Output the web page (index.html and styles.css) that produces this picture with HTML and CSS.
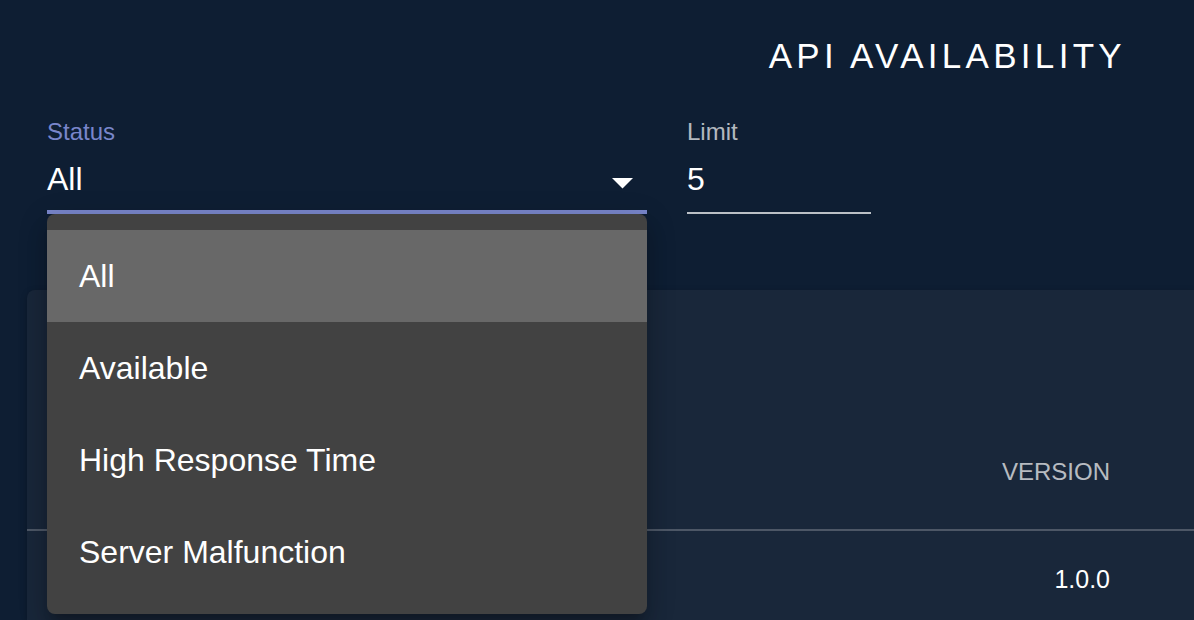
FILE: index.html
```html
<!DOCTYPE html>
<html lang="en">
<head>
<meta charset="utf-8">
<title>API Availability</title>
<link rel="stylesheet" href="styles.css">
</head>
<body>
<div class="page">
  <header class="top">
    <h1 class="title">API AVAILABILITY</h1>
  </header>

  <div class="filters">
    <div class="field field-status">
      <label class="label label-active">Status</label>
      <div class="control control-focused">
        <span class="value">All</span>
        <svg class="arrow" viewBox="0 0 10 5" width="21" height="10.5" aria-hidden="true"><path d="M0 0l5 5 5-5z" fill="#ffffff"/></svg>
      </div>
      <ul class="menu">
        <li class="menu-item menu-item-selected">All</li>
        <li class="menu-item">Available</li>
        <li class="menu-item">High Response Time</li>
        <li class="menu-item">Server Malfunction</li>
      </ul>
    </div>
    <div class="field field-limit">
      <label class="label">Limit</label>
      <div class="control control-plain">
        <span class="value">5</span>
      </div>
    </div>
  </div>

  <section class="card">
    <table class="table">
      <thead>
        <tr><th class="cell-spacer"></th><th class="head-cell">VERSION</th></tr>
      </thead>
      <tbody>
        <tr><td class="cell-spacer"></td><td class="body-cell">1.0.0</td></tr>
      </tbody>
    </table>
  </section>
</div>
</body>
</html>
```

FILE: styles.css
```css
* { box-sizing: border-box; }

html, body {
  margin: 0;
  padding: 0;
  background: #0e1e33;
  overflow: hidden;
}

body {
  font-family: "Liberation Sans", Arial, sans-serif;
  color: #ffffff;
  width: 1194px;
  height: 620px;
}

.page {
  padding-top: 36px;
}

.top {
  padding-right: 68px;
  text-align: right;
}

.title {
  margin: 0;
  font-size: 35px;
  line-height: 40px;
  font-weight: 400;
  letter-spacing: 4.3px;
  color: #ffffff;
}

.filters {
  display: flex;
  gap: 40px;
  margin-top: 44px;
  padding-left: 47px;
}

.field {
  display: flex;
  flex-direction: column;
  position: relative;
}

.field-status { width: 600px; }
.field-limit { width: 184px; }

.label {
  font-size: 24px;
  line-height: 24px;
  color: rgba(255, 255, 255, 0.7);
}

.label-active { color: #7986cb; }

.control {
  display: flex;
  justify-content: space-between;
  padding-top: 16px;
}

.control-focused {
  padding-bottom: 12px;
  border-bottom: 4px solid #7986cb;
}

.control-plain {
  padding-bottom: 14px;
  border-bottom: 2px solid rgba(255, 255, 255, 0.72);
}

.value {
  font-size: 32px;
  line-height: 38px;
  height: 38px;
}

.arrow {
  margin-top: 18px;
  margin-right: 14px;
}

.menu {
  position: absolute;
  left: 0;
  top: 94px;
  width: 600px;
  margin: 0;
  padding: 16px 0;
  list-style: none;
  background: #424242;
  border-radius: 8px;
  box-shadow: 0 10px 10px -6px rgba(0,0,0,0.2), 0 16px 20px 2px rgba(0,0,0,0.14), 0 6px 28px 4px rgba(0,0,0,0.12);
  z-index: 10;
}

.menu-item {
  display: flex;
  align-items: center;
  height: 92px;
  padding: 0 32px;
  font-size: 32px;
  line-height: 38px;
  color: #ffffff;
}

.menu-item-selected { background: #686868; }

.card {
  margin-top: 76px;
  margin-left: 27px;
  height: 330px;
  background: #19273a;
  border-radius: 8px 0 0 0;
  box-shadow: 0 2px 6px rgba(0,0,0,0.25);
}

.table {
  width: 100%;
  border-collapse: collapse;
}

.cell-spacer { padding: 0; }

.head-cell {
  padding: 170px 84px 45px 0;
  text-align: right;
  font-size: 24px;
  line-height: 24px;
  font-weight: 400;
  color: rgba(255, 255, 255, 0.7);
  width: 300px;
}

.table thead tr { border-bottom: 2px solid #4d5766; }

.body-cell {
  padding: 36px 84px 0 0;
  text-align: right;
  font-size: 25px;
  line-height: 25px;
  color: #ffffff;
}
```
